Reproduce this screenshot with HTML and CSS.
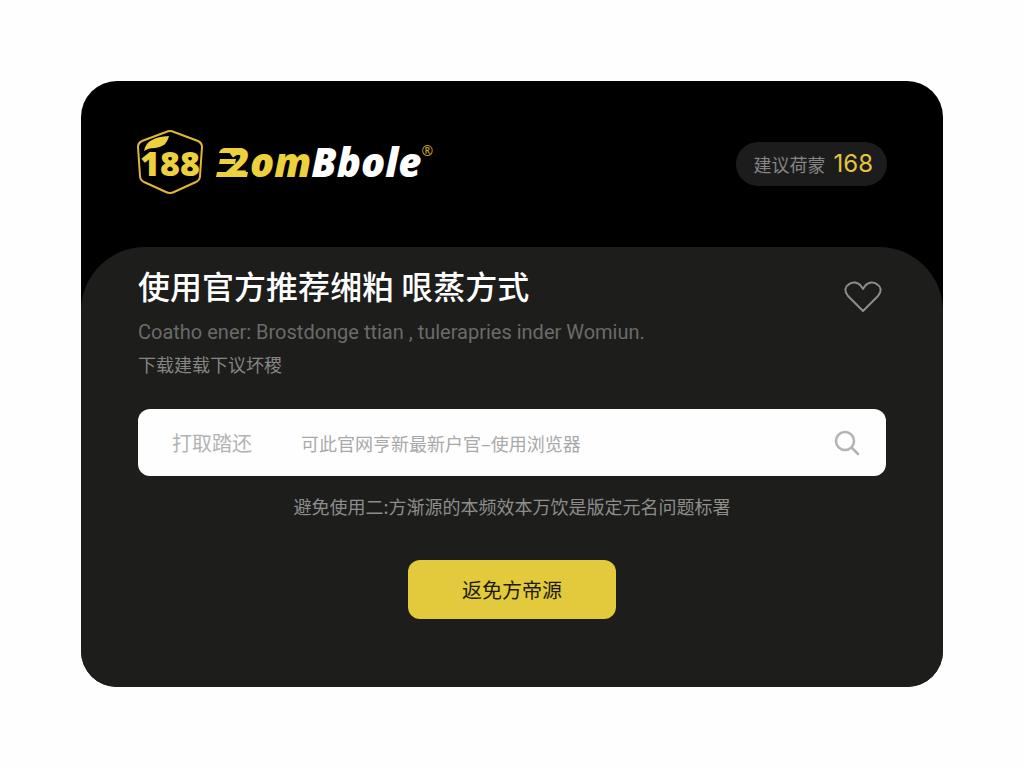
FILE: index.html
```html
<!DOCTYPE html>
<html lang="zh-CN">
<head>
  <meta charset="UTF-8">
  <meta name="viewport" content="width=device-width, initial-scale=1">
  <title>ZomBbole 188</title>
  <link rel="stylesheet" href="styles.css">
</head>
<body>
  <main class="card">
    <header class="header">
      <div class="logo">
        <svg class="logo-badge" width="68" height="66" viewBox="0 0 68 66">
          <path d="M30 3 Q34 1 38 3 L62 12 Q66 14 66 18 L64 47 Q64 51 60 53 L38 63 Q34 65 30 63 L8 53 Q4 51 4 47 L2 18 Q2 14 6 12 Z" fill="none" stroke="#dcb835" stroke-width="2"/>
          <text class="badge-text" x="34" y="47" text-anchor="middle">188</text>
          <path d="M8 22 C10 12 18 8 33 7 C31 15 27 18 19 19 C14 19 11 20 8 22 Z" fill="#ecd03e"/>
        </svg>
        <svg class="logo-mark" width="34" height="34" viewBox="0 0 34 34">
          <path d="M8 3 H24 V8 H3 Q4 4 8 3 Z M4 14 H20 L19 19 H3 Z M1 27 H32 L31 32 H0 Z" fill="#ecd03e"/>
          <text class="mark-text" x="10" y="32">2</text>
        </svg>
        <span class="logo-text"><span class="logo-yellow">om</span>Bbole</span>
        <sup class="logo-reg">®</sup>
      </div>
      <div class="pill">建议荷蒙 <span class="pill-num">168</span></div>
    </header>

    <section class="panel">
      <div class="title-row">
        <h1>使用官方推荐缃粕 哏蒸方式</h1>
        <button class="fav" type="button" aria-label="收藏">
          <svg width="38" height="32" viewBox="0 0 38 32">
            <path d="M19 30 L4 15 C0 10 1 6 4 4 C8 0 14 1 17 5 L19 8 L21 5 C24 1 30 0 34 4 C37 6 38 10 34 15 Z" fill="none" stroke="#8d8d8b" stroke-width="2" stroke-linejoin="round"/>
          </svg>
        </button>
      </div>
      <p class="sub">Coatho ener: Brostdonge ttian , tulerapries inder Womiun.</p>
      <p class="sub sub-cn">下载建载下议坏稷</p>

      <form class="search">
        <label for="searchInput">打取踏还</label>
        <input type="text" id="searchInput" placeholder="可此官网亨新最新户官–使用浏览器">
        <button class="search-btn" type="button" aria-label="搜索">
          <svg width="26" height="26" viewBox="0 0 26 26">
            <path d="M18 18 L24 24" stroke="#b3b3b3" stroke-width="2.5" stroke-linecap="round"/>
            <circle cx="11" cy="11" r="9" fill="none" stroke="#b3b3b3" stroke-width="2.5"/>
          </svg>
        </button>
      </form>

      <p class="note">避免使用二:方渐源的本频效本万饮是版定元名问题标署</p>
      <button class="main-btn" type="button">返免方帝源</button>
    </section>
  </main>
</body>
</html>
```
FILE: styles.css
```css
* { box-sizing: border-box; }
body {
  font-family: "Noto Sans CJK SC", sans-serif;
  background-color: #fefefe;
  margin: 0; padding: 81px;
}
h1, p { margin: 0; }
button { border: none; background: none; padding: 0; cursor: pointer; }
svg { display: block; }

.card {
  max-width: 960px; margin: auto; overflow: hidden;
  background-color: #000; border-radius: 36px;
}

.header {
  display: flex; justify-content: space-between; align-items: center;
  height: 166px; padding: 0 56px 0 55px;
}
.logo { display: flex; align-items: center; margin-bottom: 4px; }
.badge-text { font: 800 34px "Open Sans", sans-serif; fill: #ecd03e; }
.logo-mark { margin-left: 12px; overflow: visible; }
.mark-text { font: italic 800 40px "Open Sans", sans-serif; fill: #ecd03e; }
.logo-text {
  font: italic 800 40px/48px "Open Sans", sans-serif; color: #fff;
}
.logo-yellow { color: #ecd03e; }
.logo-reg {
  align-self: flex-start; margin-top: 12px;
  font: 14px/20px "Noto Sans", sans-serif; color: #c9a42e;
}
.pill {
  display: flex; align-items: center; gap: 8px;
  height: 44px; padding: 0 14px 0 18px; border-radius: 22px;
  background-color: #1c1c1c; color: #858585; font-size: 18px;
}
.pill-num { font: 24px/32px Inter, sans-serif; color: #e3c33f; }

.panel {
  padding: 18px 57px 68px; text-align: center;
  background-color: #1d1d1c; border-radius: 64px 64px 0 0;
}
.title-row { display: flex; justify-content: space-between; }
h1 { font-size: 32px; line-height: 40px; font-weight: 500; color: #fff; }
.fav { align-self: flex-end; height: 24px; margin-right: 4px; }
.fav svg { overflow: visible; }
.sub {
  margin-top: 11px; text-align: left;
  font: 20px/32px Roboto, "Noto Sans CJK SC", sans-serif; color: #6b6b69;
}
.sub-cn { margin-top: 2px; font-size: 18px; color: #858583; }

.search {
  display: flex; align-items: center;
  height: 67px; margin-top: 27px; padding: 0 26px 0 34px;
  background-color: #fefefe; border-radius: 12px;
}
.search label { width: 129px; text-align: left; font-size: 20px; color: #b3b3b3; }
.search input {
  flex: 1; min-width: 0; padding: 0; border: none; outline: none; background: none;
  font-family: inherit; font-size: 18px; color: #333;
}
.search input::placeholder { color: #a9a9a9; }

.note { margin-top: 14px; font-size: 18px; line-height: 32px; color: #8d8d8b; }
.main-btn {
  height: 59px; margin-top: 38px; padding: 0 54px; border-radius: 12px;
  background-color: #e3ca3c; color: #1d1a08;
  font-family: inherit; font-size: 20px;
}
@media (max-width: 700px) {
  body { padding: 20px; }
  .header { flex-wrap: wrap; height: auto; gap: 16px; padding: 20px; }
  .panel { padding: 20px 20px 40px; }
  .search label { width: auto; margin-right: 16px; }
}
```
